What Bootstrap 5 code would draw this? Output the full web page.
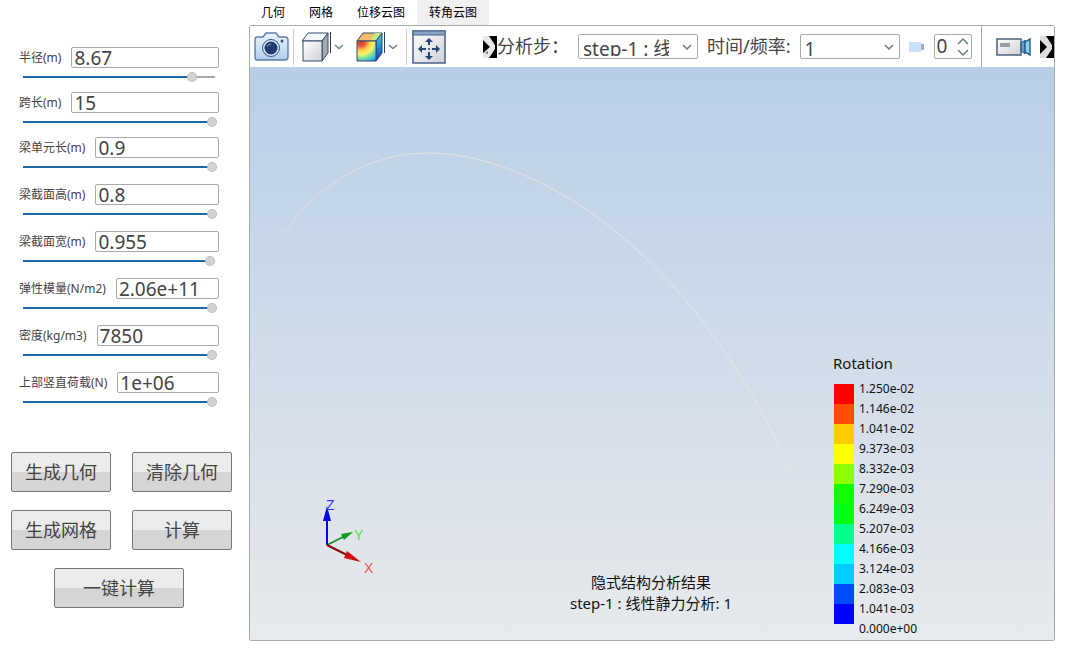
<!DOCTYPE html>
<html lang="zh-CN">
<head>
<meta charset="utf-8">
<meta name="viewport" content="width=device-width, initial-scale=1">
<title>转角云图</title>
<link href="https://cdn.jsdelivr.net/npm/bootstrap@5.3.0/dist/css/bootstrap.min.css" rel="stylesheet">
<style>
  body { font-family: "Noto Sans", "Noto Sans CJK SC", sans-serif; color: #444; font-size: 12px; background: #fff; }
  .side { width: 249px; padding-top: 47px; }
  .param { height: 45px; padding: 0 30px 0 19px; }
  .param.loose { height: 47px; }
  .param label { line-height: 21px; color: #444; }
  .param-line { gap: 10px; height: 21px; }
  .param .form-control { height: 21px; padding: 0 2px; font-size: 19px; line-height: 19px; border: 1px solid #aaa; border-radius: 2px; color: #444; min-width: 0; box-shadow: none; }
  .track { display: block; appearance: none; height: 10px; margin: 4px 2px 0 4px; width: 194px;
    background: linear-gradient(90deg, #1c69a8 var(--fill), #aaa var(--fill)) left center / 192px 2px no-repeat; }
  .track::-webkit-slider-thumb { appearance: none; width: 10px; height: 10px; border-radius: 50%; background: #d2d2d2; border: 1px dotted #aaa; }
  .actions { display: grid; grid-template-columns: 100px 100px; gap: 18px 21px; padding: 33px 0 0 11px; }
  .act { height: 40px; border: 1px solid #777; border-radius: 2px; padding: 0; font-size: 18px; color: #444; line-height: 38px;
    background: linear-gradient(#ececec 50%, #d5d5d5 50%); }
  .act-wide { grid-column: 1 / 3; width: 130px; margin-left: 43px; }
  .stage { padding: 0 10px 11px 0; min-width: 0; }
  .nav-tabs.views { border: 0; height: 25px; }
  .views .nav-link { border: 0; border-radius: 0; padding: 0 12px; color: #000; font-size: 12px; line-height: 25px; }
  .views .nav-link.active { background: #f0f0f0; color: #000; }
  .viewer { border: 1px solid #aaa; border-radius: 2px; min-height: 0; }
  .tools { height: 41px; background: #fff; font-size: 18px; color: #444; padding-left: 4px; white-space: nowrap; }
  .tools svg { display: block; flex: none; }
  .tool { border: 0; background: none; padding: 0; flex: none; }
  .drop { margin-left: 2px; }
  .mark-first { margin-left: 36px; }
  .fields { gap: 9px; }
  .rule { width: 1px; height: 36px; background: #ccc; flex: none; }
  .rule-full { height: 42px; background: #aaa; margin-left: 9px; }
  .video { margin-left: 14px; }
  .pick { appearance: none; height: 25px; border: 1px solid #aaa; border-radius: 2px; font-size: 19px; color: #444; padding: 0 28px 2px 4px; flex: none;
    background: #fff url("data:image/svg+xml,%3Csvg xmlns='http://www.w3.org/2000/svg' width='10' height='6'%3E%3Cpath d='M1 1l4 4 4-4' fill='none' stroke='%23697c80' stroke-width='1.5'/%3E%3C/svg%3E") no-repeat right 5px center; }
  .pick-step { width: 120px; }
  .pick-time { width: 100px; }
  .spin { width: 38px; height: 25px; border: 1px solid #aaa; border-radius: 2px; flex: none; }
  .spin input { width: 20px; border: 0; padding: 0 0 0 2px; font-size: 19px; line-height: 23px; height: 23px; color: #444; appearance: textfield; background: none; }
  .spin input::-webkit-inner-spin-button { appearance: none; }
  .canvas { background: linear-gradient(#b9cee6, #e8eaec); color: #111; min-height: 0; }
  .scene { position: absolute; inset: 0; width: 100%; height: 100%; }
  .key { position: absolute; right: 134px; bottom: 1px; width: 87px; }
  .key-title { font-size: 15px; line-height: 20px; margin-bottom: 1px; }
  .key-body { padding-left: 1px; gap: 5px; }
  .key-bars { padding-top: 10px; }
  .key-bars i { display: block; width: 20px; height: 20px; }
  .key-text { font-size: 12px; line-height: 20px; padding-top: 5px; }
  .caption { position: absolute; left: 0; right: 2px; bottom: 26px; font-size: 15px; line-height: 21px; }
</style>
</head>
<body>
<div class="d-flex vh-100">
  <aside class="side flex-shrink-0">
    <form id="params"></form>
    <div class="actions">
      <button class="act" type="button">生成几何</button>
      <button class="act" type="button">清除几何</button>
      <button class="act" type="button">生成网格</button>
      <button class="act" type="button">计算</button>
      <button class="act act-wide" type="button">一键计算</button>
    </div>
  </aside>

  <main class="stage flex-grow-1 d-flex flex-column">
    <nav class="nav nav-tabs views flex-shrink-0">
      <a class="nav-link" href="#">几何</a>
      <a class="nav-link" href="#">网格</a>
      <a class="nav-link" href="#">位移云图</a>
      <a class="nav-link active" href="#">转角云图</a>
    </nav>
    <section class="viewer flex-grow-1 d-flex flex-column">
      <div class="tools d-flex align-items-center flex-shrink-0 overflow-hidden">
        <button class="tool" type="button" aria-label="截图">
          <svg width="35" height="32" viewBox="0 0 35 32">
            <defs><linearGradient id="cam" x2="0" y2="1"><stop stop-color="#edf5fd"/><stop offset="1" stop-color="#aecdec"/></linearGradient></defs>
            <path d="M3 6H9L12 2H22L25 6H31Q34 6 34 9V26Q34 29 31 29H3Q1 29 1 26V9Q1 6 3 6Z" fill="url(#cam)" stroke="#5b7cab" stroke-width="1.400"/>
            <circle cx="17" cy="17" r="8.500" fill="#d6e7f7" stroke="#35547f"/><circle cx="17" cy="17" r="6.500" fill="#203b70"/>
            <path d="M13 16Q14 13 17 13" stroke="#89a5cc" fill="none"/><circle cx="28" cy="10" r="1.500" fill="#304f82"/>
          </svg>
        </button>
        <span class="rule ms-1"></span>
        <button class="tool d-flex align-items-center ms-2" type="button" aria-label="显示模式">
          <svg width="30" height="32" viewBox="0 0 30 32">
            <defs><linearGradient id="box" x2="1" y2="1"><stop stop-color="#fff"/><stop offset="1" stop-color="#cfd1d6"/></linearGradient></defs>
            <path d="M0 10L6 2H26L20 10Z" fill="#f3f8ff" stroke="#34496b"/><path d="M20 10L26 2V22L20 30Z" fill="#a6a8ae" stroke="#34496b"/>
            <path d="M1 10H20V30H1Z" fill="url(#box)" stroke="#34496b"/><path d="M28.500 1V22" stroke="#2c4162"/>
          </svg>
          <svg class="drop" width="10" height="6"><path d="M1 1L5 4.500L9 1" fill="none" stroke="#788487" stroke-width="1.500"/></svg>
        </button>
        <button class="tool d-flex align-items-center ms-2" type="button" aria-label="云图模式">
          <svg class="ms-1" width="30" height="32" viewBox="0 0 30 32">
            <defs>
              <radialGradient id="heat" gradientUnits="userSpaceOnUse" cx="5" cy="11" r="25"><stop stop-color="#d93525"/><stop offset=".18" stop-color="#ee5d3f"/><stop offset=".34" stop-color="#ffd24f"/><stop offset=".5" stop-color="#f6f56b"/><stop offset=".66" stop-color="#77df9b"/><stop offset=".82" stop-color="#34b8e8"/><stop offset="1" stop-color="#1546bb"/></radialGradient>
              <linearGradient id="heatSide" x2="0" y2="1"><stop stop-color="#5fd4ac"/><stop offset=".5" stop-color="#218bdd"/><stop offset="1" stop-color="#1736a5"/></linearGradient>
            </defs>
            <path d="M1 10L7 2H26L20 10Z" fill="#f3bd67" stroke="#34496b"/><path d="M15 9L19 2H26L20 9Z" fill="#c4ec89"/>
            <path d="M20 10L26 2V22L20 30Z" fill="url(#heatSide)" stroke="#24427c"/><path d="M1 10H20V30H1Z" fill="url(#heat)" stroke="#34496b"/><path d="M28.500 1V22" stroke="#2c4162"/>
          </svg>
          <svg class="drop" width="10" height="6"><path d="M1 1L5 4.500L9 1" fill="none" stroke="#788487" stroke-width="1.500"/></svg>
        </button>
        <span class="rule ms-2"></span>
        <button class="tool ms-1" type="button" aria-label="适应窗口">
          <svg width="36" height="34" viewBox="-1 0 36 34">
            <path d="M1 1H33V33H1Z" fill="url(#box)" stroke="#4b6289" stroke-width="1.500"/><path d="M1 1H33V5H1Z" fill="#8ba3c4" stroke="#4b6289"/>
            <g fill="none" stroke="#274574" stroke-width="2"><path d="M17 15V10M17 22V27M14 19H9M20 19H25"/></g>
            <path d="M17 8L13 12H21ZM17 30L13 26H21ZM6 19L10 15V23ZM28 19L24 15V23Z" fill="#274574"/><circle cx="17" cy="19" r="1" fill="#274574"/>
          </svg>
        </button>
        <svg class="mark-first" width="14" height="22" viewBox="0 0 14 22">
          <defs><filter id="soft"><feGaussianBlur stdDeviation=".7"/></filter></defs>
          <path d="M3 0H14V22H3Z" fill="#000"/>
          <g filter="url(#soft)"><path d="M0 0H6L12 9V13L6 22H0Z" fill="#e8e8e8"/><path d="M0 4L7 11L0 17Z" fill="#000"/><path d="M2 17L5 15V18Z" fill="#777"/></g>
        </svg>
        <div class="fields d-flex align-items-center flex-shrink-0">
          <label for="step">分析步：</label>
          <select class="pick pick-step" id="step"><option>step-1 : 线性静力分析</option></select>
          <label for="time">时间/频率:</label>
          <select class="pick pick-time" id="time"><option>1</option></select>
          <svg width="16" height="10"><path d="M0 0H12V10H0Z" fill="#cce1ff"/><path d="M12 2H15V8H12Z" fill="#9dadc6"/></svg>
          <div class="spin d-flex align-items-center">
            <input type="number" value="0" min="0" aria-label="帧">
            <svg width="14" height="20"><path d="M3 7L8 2L13 7M3 13L8 18L13 13" fill="none" stroke="#697c80" stroke-width="1.500"/></svg>
          </div>
        </div>
        <span class="rule rule-full"></span>
        <button class="tool video" type="button" aria-label="录像">
          <svg width="36" height="22" viewBox="0 0 36 22">
            <path d="M1 3H25V19H1Z" fill="url(#box)" stroke="#52617b" stroke-width="1.500"/><path d="M4 7H14V11H4Z" fill="#999da5"/>
            <path d="M25 7L29 4V18L25 15Z" fill="#5d9bc9" stroke="#284f77"/><path d="M29 6L34 3V19L29 16Z" fill="#95cdec" stroke="#276395" stroke-width="1.500"/>
          </svg>
        </button>
        <svg class="ms-2" width="14" height="22" viewBox="0 0 14 22">
          <path d="M0 0H14V22H0Z" fill="#000"/>
          <g filter="url(#soft)"><path d="M0 0H6L12 9V13L6 22H0Z" fill="#ddd"/><path d="M0 4L7 11L0 18Z" fill="#000"/></g>
        </svg>
      </div>

      <div class="canvas position-relative flex-grow-1 overflow-hidden">
        <svg class="scene" viewBox="0 0 804 572" preserveAspectRatio="xMinYMax meet" font-family="Liberation Sans, sans-serif" font-size="14">
          <defs><linearGradient id="arc" x2="1" y2="0"><stop stop-color="#dcdddc"/><stop offset=".6" stop-color="#e2e4e4"/><stop offset="1" stop-color="#e4e7e9"/></linearGradient></defs>
          <path d="M33 168C65 117 120 85 178 85C280 85 440 176 540 402" fill="none" stroke="url(#arc)"/>
          <path d="M77 477V448" stroke="#0808d8" stroke-width="2"/><path d="M77 438L73 453H81Z" fill="#0808e8"/>
          <path d="M77 477L95 468" stroke="#148a20" stroke-width="1.500"/><path d="M103 464L91 466L94 472Z" fill="#0a9d18"/>
          <path d="M77 477L97 487" stroke="#8a0808" stroke-width="2"/><path d="M111 494L97 483L94 490Z" fill="#d00c0c"/>
          <text x="76" y="442" fill="#3434ff">Z</text><text x="104" y="472" fill="#42e642">Y</text><text x="114" y="505" fill="#f05050">X</text>
        </svg>
        <div class="caption text-center">隐式结构分析结果<br>step-1 : 线性静力分析: 1</div>
        <div class="key">
          <div class="key-title">Rotation</div>
          <div class="key-body d-flex"><div class="key-bars" id="bars"></div><div class="key-text" id="levels"></div></div>
        </div>
      </div>
    </section>
  </main>
</div>
<script src="https://cdn.jsdelivr.net/npm/bootstrap@5.3.0/dist/js/bootstrap.bundle.min.js"></script>
<script>
  const params = [
    ['半径(m)', '8.67', 89], ['跨长(m)', '15', 100], ['梁单元长(m)', '0.9', 100], ['梁截面高(m)', '0.8', 100],
    ['梁截面宽(m)', '0.955', 99], ['弹性模量(N/m2)', '2.06e+11', 100], ['密度(kg/m3)', '7850', 100], ['上部竖直荷载(N)', '1e+06', 100]
  ];
  document.getElementById('params').innerHTML = params.map(([name, value, pos], i) => `
    <div class="param ${i > 1 ? 'loose' : ''}">
      <div class="param-line d-flex"><label class="flex-shrink-0" for="p${i}">${name}</label><input class="form-control" type="text" id="p${i}" value="${value}"></div>
      <input class="track" type="range" min="0" max="100" value="${pos}" aria-label="${name}" style="--fill:${pos}%">
    </div>`).join('');
  const colors = ['#ff0000', '#ff4d00', '#ffcc00', '#ffff00', '#8cff00', '#12ff00', '#00ff12', '#00ff8c', '#00ffff', '#00ccff', '#004dff', '#0000ff'];
  document.getElementById('bars').innerHTML = colors.map(c => `<i style="background:${c}"></i>`).join('');
  const levels = ['1.250e-02', '1.146e-02', '1.041e-02', '9.373e-03', '8.332e-03', '7.290e-03', '6.249e-03', '5.207e-03', '4.166e-03', '3.124e-03', '2.083e-03', '1.041e-03', '0.000e+00'];
  document.getElementById('levels').innerHTML = levels.map(v => `<div>${v}</div>`).join('');
</script>
</body>
</html>
